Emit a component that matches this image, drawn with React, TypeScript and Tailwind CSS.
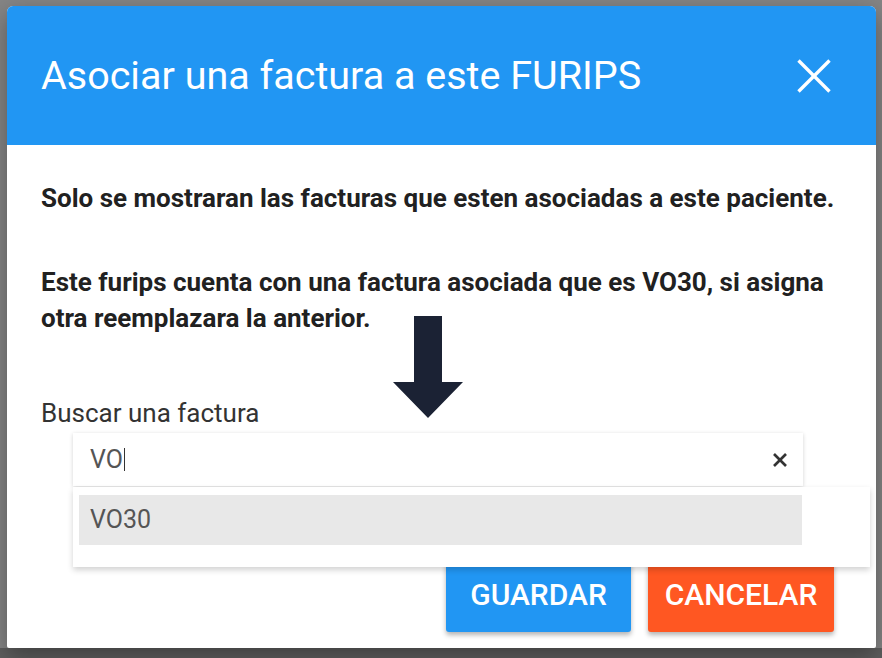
import React from "react";

export default function App() {
  return (
    <div
      className="w-[882px] h-[658px] bg-[#858585] overflow-hidden relative"
      style={{ fontFamily: "Roboto, 'Liberation Sans', sans-serif" }}
    >
      <div className="absolute left-0 right-0 bottom-0 h-[10px] bg-[#5e5e5e]" />
      <div className="pt-[6px] pl-[7px] relative">
        <div className="w-[869px] h-[642px] bg-white rounded-t-[6px] rounded-b-[2px] shadow-[0_8px_24px_rgba(0,0,0,0.35)] flex flex-col overflow-visible">
          {/* header */}
          <div className="h-[139px] bg-[#2196f3] rounded-t-[6px] flex items-center justify-between pl-[34px] pr-[34px] shrink-0">
            <h1 className="text-white text-[39.5px] font-normal leading-none">
              Asociar una factura a este FURIPS
            </h1>
            <svg width="40" height="40" viewBox="0 0 40 40" className="mr-[8px]">
              <line x1="4.5" y1="4.5" x2="35.5" y2="35.5" stroke="white" strokeWidth="3.4" />
              <line x1="35.5" y1="4.5" x2="4.5" y2="35.5" stroke="white" strokeWidth="3.4" />
            </svg>
          </div>

          {/* body */}
          <div className="flex-1 px-[34px] relative">
            <p className="mt-[35px] text-[#212121] font-bold text-[26px] leading-[36px]">
              Solo se mostraran las facturas que esten asociadas a este paciente.
            </p>
            <p className="mt-[48px] text-[#212121] font-bold text-[26px] leading-[36px]">
              Este furips cuenta con una factura asociada que es VO30, si asigna otra reemplazara la anterior.
            </p>
            <label className="block mt-[62px] text-[#333333] text-[26px] leading-[30px]">
              Buscar una factura
            </label>

            {/* autocomplete */}
            <div className="relative mt-[5px] ml-[32px] w-[797px] z-10">
              <div className="w-[730px] h-[53px] bg-white flex items-center justify-between pl-[17px] pr-[15px] shadow-[0_1px_4px_rgba(0,0,0,0.18)]">
                <div className="flex items-center text-[25px] text-[#555555]">
                  <span>VO</span>
                  <span className="inline-block w-[1px] h-[23px] bg-[#333333] ml-[1px]" />
                </div>
                <svg width="16" height="16" viewBox="0 0 16 16">
                  <line x1="2" y1="2" x2="14" y2="14" stroke="#333333" strokeWidth="2.6" />
                  <line x1="14" y1="2" x2="2" y2="14" stroke="#333333" strokeWidth="2.6" />
                </svg>
              </div>
              <div className="absolute left-0 top-[54px] w-[797px] h-[80px] bg-white shadow-[0_3px_6px_rgba(0,0,0,0.18)] pt-[8px] pl-[6px]">
                <div className="w-[723px] h-[50px] bg-[#e8e8e8] flex items-center pl-[11px] text-[25px] text-[#555555]">
                  VO30
                </div>
              </div>
            </div>
          </div>

          {/* footer */}
          <div className="flex justify-end gap-[17px] pr-[42px] pb-[16px] shrink-0">
            <button className="w-[185px] h-[72px] pb-[4px] bg-[#2196f3] text-white text-[30px] font-medium rounded-[3px] shadow-[0_3px_5px_rgba(0,0,0,0.3)]">
              GUARDAR
            </button>
            <button className="w-[186px] h-[72px] pb-[4px] bg-[#ff5722] text-white text-[30px] font-medium rounded-[3px] shadow-[0_3px_5px_rgba(0,0,0,0.3)]">
              CANCELAR
            </button>
          </div>
        </div>
      </div>

      {/* annotation arrow */}
      <svg
        className="absolute left-[393px] top-[316px]"
        width="70"
        height="104"
        viewBox="0 0 70 104"
      >
        <path d="M21 0 H49 V66 H70 L35 102 L0 66 H21 Z" fill="#1b2234" />
      </svg>
    </div>
  );
}
